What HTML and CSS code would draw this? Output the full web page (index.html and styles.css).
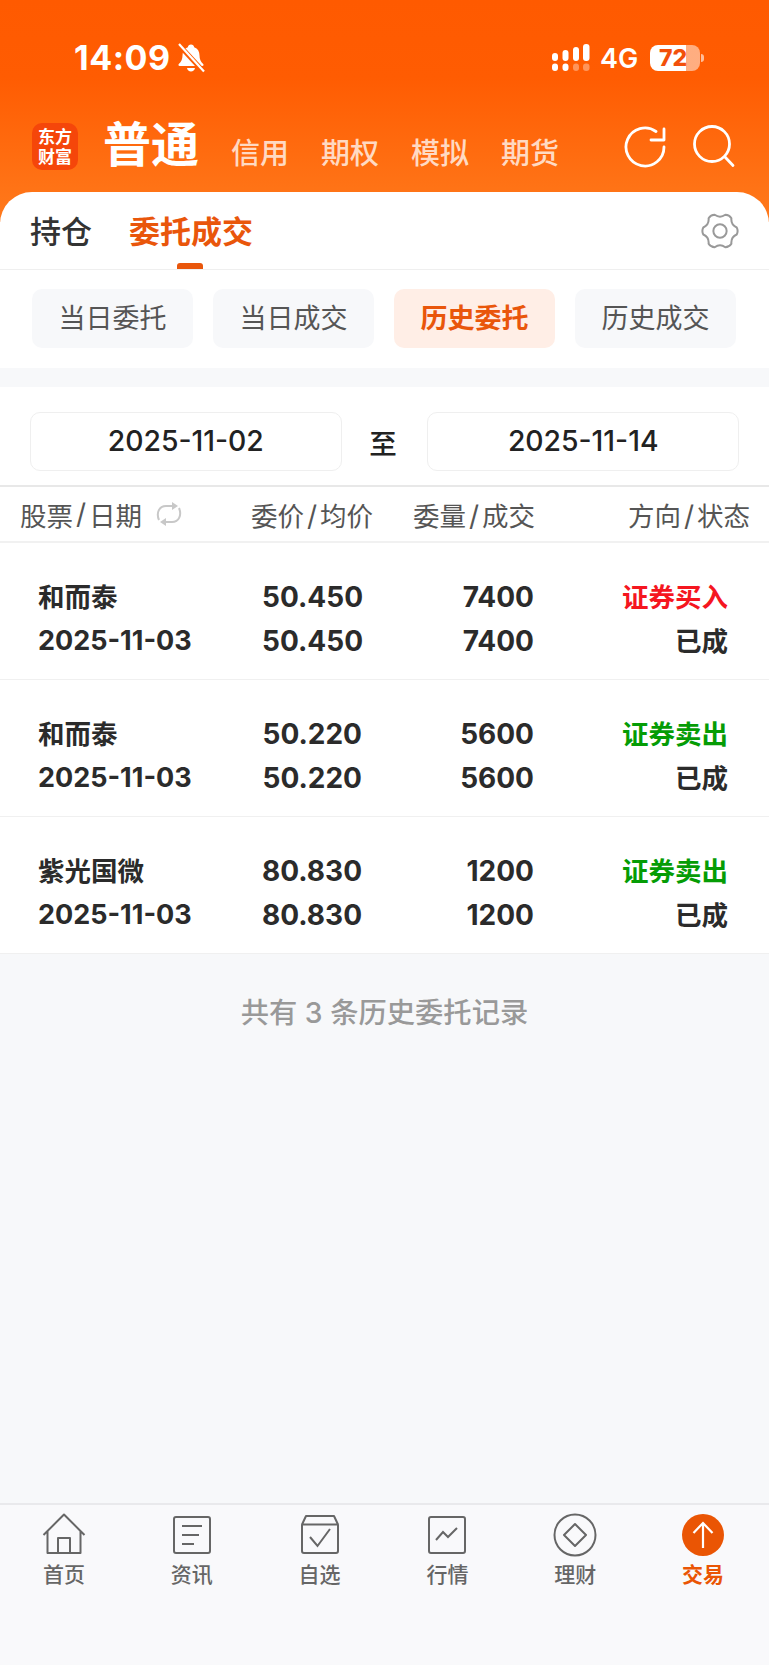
FILE: index.html
```html
<!DOCTYPE html>
<html lang="zh-CN">
<head>
    <meta charset="UTF-8">
    <title>委托成交</title>
    <link rel="stylesheet" href="styles.css">
</head>
<body>
<div class="page">
    <header class="top">
        <div class="status">
            <span class="time">14:09</span>
            <svg class="bell" width="28" height="30" viewBox="0 0 28 30">
                <path d="M14 1.500c-1.800 0-3 1.200-3.200 2.800-3.600 1.200-5.300 4.300-5.300 8.200 0 3.800-1.200 6.200-3.700 8.500-.8.800-.3 2 .9 2h22.600c1.200 0 1.700-1.200.9-2-2.500-2.300-3.700-4.700-3.700-8.500 0-3.900-1.700-7-5.300-8.200C17 2.700 15.800 1.500 14 1.500zM10 25c.4 2.200 2 3.600 4 3.600s3.600-1.400 4-3.600z" fill="#fff"/>
                <path d="M1.500 1.500 26.500 28.500" stroke="#ff5c02" stroke-width="5"/>
                <path d="M2 1 27 28.500" stroke="#fff" stroke-width="2.200"/>
            </svg>
            <span class="grow"></span>
            <svg class="signal" width="40" height="28" viewBox="0 0 40 28">
                <g fill="#fff">
                    <rect x="1" y="9" width="6" height="8" rx="3"/>
                    <rect x="11.500" y="6" width="6" height="11" rx="3"/>
                    <rect x="22" y="3" width="6" height="14" rx="3"/>
                    <rect x="32" y="0" width="6.500" height="17" rx="3"/>
                    <rect x="1" y="19.500" width="6" height="7.500" rx="3"/>
                    <rect x="11.500" y="19.500" width="6" height="7.500" rx="3"/>
                </g>
                <g fill="#fff" opacity=".35">
                    <rect x="22" y="19.500" width="6" height="7.500" rx="3"/>
                    <rect x="32" y="19.500" width="6.500" height="7.500" rx="3"/>
                </g>
            </svg>
            <span class="net">4G</span>
            <span class="battery"><span class="batteryNum">72</span></span>
            <span class="batteryNub"></span>
        </div>
        <div class="brand">
            <div class="logo"><span>东方</span><span>财富</span></div>
            <span class="accNow">普通</span>
            <span class="acc acc1">信用</span>
            <span class="acc">期权</span>
            <span class="acc">模拟</span>
            <span class="acc">期货</span>
            <span class="grow"></span>
            <svg class="topIcon" width="44" height="44" viewBox="0 0 44 44" fill="none" stroke="#fff" stroke-width="2.800">
                <path d="M40 23A19 19 0 1 1 32 7.500" stroke-linecap="round"/>
                <path d="M27 16H40V5" stroke-linecap="round" stroke-linejoin="round"/>
            </svg>
            <svg class="topIcon searchIcon" width="44" height="44" viewBox="0 0 44 44" fill="none" stroke="#fff" stroke-width="2.800">
                <circle cx="20" cy="20" r="17.500"/>
                <path d="M33 33 41 41.500" stroke-linecap="round"/>
            </svg>
        </div>
    </header>

    <div class="sheet">
        <div class="tabs">
            <span class="tab">持仓</span>
            <span class="tab tabOn">委托成交</span>
            <span class="grow"></span>
            <svg class="gear" width="38" height="38" viewBox="0 0 40 40" fill="none" stroke="#999" stroke-width="2.100">
                <path d="M37.600 16.300Q39.500 20 37.600 23.700Q31.300 26.500 32 33.400Q29.750 36.900 25.600 37.100Q20 33 14.400 37.100Q10.250 36.900 8 33.400Q8.700 26.500 2.400 23.700Q.5 20 2.400 16.300Q8.700 13.500 8 6.600Q10.250 3.100 14.400 2.900Q20 7 25.600 2.900Q29.750 3.100 32 6.600Q31.300 13.500 37.600 16.300z" stroke-linejoin="round"/>
                <circle cx="20" cy="20" r="7"/>
            </svg>
        </div>
        <div class="chips">
            <span class="chip">当日委托</span>
            <span class="chip">当日成交</span>
            <span class="chip chipOn">历史委托</span>
            <span class="chip">历史成交</span>
        </div>
    </div>

    <div class="dates">
        <span class="dateBox">2025-11-02</span>
        <span class="dateTo">至</span>
        <span class="dateBox">2025-11-14</span>
    </div>

    <div class="thead">
        <span class="th th1">股票<i>/</i>日期
            <svg class="swap" width="28" height="28" viewBox="0 0 28 28" fill="none" stroke="#c8c8c8" stroke-width="2">
                <path d="M4 20C1 13 4 6 11 6h7"/>
                <path d="M24 8c3 7 0 14-7 14h-7"/>
                <path d="M17 2 23 6l-6 4zM11 18 5 22l6 4z" fill="#c8c8c8" stroke="none"/>
            </svg>
        </span>
        <span class="th">委价<i>/</i>均价</span>
        <span class="th">委量<i>/</i>成交</span>
        <span class="th">方向<i>/</i>状态</span>
    </div>

    <div class="list">
        <div class="row">
            <span class="cn">和而泰</span><span class="num">50.450</span><span class="num">7400</span><span class="num cn buy">证券买入</span>
            <span class="day">2025-11-03</span><span class="num">50.450</span><span class="num">7400</span><span class="num cn">已成</span>
        </div>
        <div class="row">
            <span class="cn">和而泰</span><span class="num">50.220</span><span class="num">5600</span><span class="num cn sell">证券卖出</span>
            <span class="day">2025-11-03</span><span class="num">50.220</span><span class="num">5600</span><span class="num cn">已成</span>
        </div>
        <div class="row">
            <span class="cn">紫光国微</span><span class="num">80.830</span><span class="num">1200</span><span class="num cn sell">证券卖出</span>
            <span class="day">2025-11-03</span><span class="num">80.830</span><span class="num">1200</span><span class="num cn">已成</span>
        </div>
    </div>

    <div class="total">共有 3 条历史委托记录</div>

    <nav class="nav">
        <div class="navItem">
            <svg width="44" height="44" viewBox="0 0 44 44" fill="none" stroke="#666" stroke-width="2">
                <path d="M1.500 22 22 1.500 42.500 22M5.500 18.500V40H38.500V18.500M16 40V25H28V40" stroke-linejoin="round"/>
            </svg>
            <span>首页</span>
        </div>
        <div class="navItem">
            <svg width="44" height="44" viewBox="0 0 44 44" fill="none" stroke="#666" stroke-width="2">
                <rect x="4" y="4" width="36" height="36" rx="2"/>
                <path d="M12 13H32M12 22H29M12 31H24"/>
            </svg>
            <span>资讯</span>
        </div>
        <div class="navItem">
            <svg width="44" height="44" viewBox="0 0 44 44" fill="none" stroke="#666" stroke-width="2">
                <path d="M4 11.500 8 3H36L40 11.500M4 11.500H40V38a2 2 0 0 1-2 2H6a2 2 0 0 1-2-2z" stroke-linejoin="round"/>
                <path d="M12 24 19.500 33 32 16"/>
            </svg>
            <span>自选</span>
        </div>
        <div class="navItem">
            <svg width="44" height="44" viewBox="0 0 44 44" fill="none" stroke="#666" stroke-width="2">
                <rect x="4" y="4" width="36" height="36" rx="2"/>
                <path d="M11 27 18 19 23 24 32 15"/>
            </svg>
            <span>行情</span>
        </div>
        <div class="navItem">
            <svg width="44" height="44" viewBox="0 0 44 44" fill="none" stroke="#666" stroke-width="2">
                <circle cx="22" cy="22" r="20.500"/>
                <path d="M22 11 33 22 22 33 11 22z" stroke-linejoin="round"/>
            </svg>
            <span>理财</span>
        </div>
        <div class="navItem navOn">
            <svg width="44" height="44" viewBox="0 0 44 44" fill="none">
                <circle cx="22" cy="22" r="21" fill="#ea5504"/>
                <path d="M22 35V10M12.500 20 22 10 31.500 20" stroke="#fff" stroke-width="2.200"/>
            </svg>
            <span>交易</span>
        </div>
    </nav>
</div>
</body>
</html>
```

FILE: styles.css
```css
*{
    box-sizing: border-box;
}
body{
    margin: 0;
    font-family: Inter, "Noto Sans CJK SC", sans-serif;
    color: #222;
    background-color: #f7f8fa;
}
.page{
    display: flex;
    flex-direction: column;
    height: 1665px;
    overflow: hidden;
}
.grow{
    flex: 1;
}

/* 顶部橙色区域 */
.top{
    height: 222px;
    padding: 0 33px 0 32px;
    background: linear-gradient(180deg, #ff5a00 0%, #ff5c02 35%, #ff7a1c 100%);
    color: #fff;
}
.status{
    display: flex;
    align-items: center;
    height: 28px;
    margin-top: 44px;
    padding: 0 32px 0 42px;
}
.time{
    font-size: 34px;
    font-weight: 700;
    letter-spacing: .5px;
    line-height: 28px;
}
.bell{
    margin-left: 6px;
}
.signal{
    margin-right: 9px;
}
.net{
    width: 44px;
    font-size: 27px;
    font-weight: 600;
}
.battery{
    display: flex;
    align-items: center;
    justify-content: center;
    width: 50px;
    height: 26px;
    margin-left: 6px;
    border-radius: 8px;
    background: linear-gradient(90deg, #fff 72%, rgba(255,255,255,.5) 72%);
}
.batteryNum{
    margin-right: 4px;
    color: #f2500a;
    font-size: 23px;
    font-weight: 800;
}
.batteryNub{
    width: 3px;
    height: 8px;
    margin-left: 1px;
    border-radius: 0 3px 3px 0;
    background-color: rgba(255,255,255,.6);
}
.brand{
    display: flex;
    align-items: flex-end;
    height: 48px;
    margin-top: 50px;
}
.logo{
    display: flex;
    flex-direction: column;
    align-items: center;
    justify-content: center;
    width: 46px;
    height: 47px;
    margin-right: 25px;
    border-radius: 10px;
    background-color: #f5460a;
    font-size: 17px;
    font-weight: 700;
    line-height: 20px;
}
.accNow{
    width: 96px;
    font-size: 48px;
    font-weight: 700;
    line-height: 50px;
}
.acc{
    width: 57px;
    margin-bottom: -3px;
    margin-left: 33px;
    color: rgba(255,255,255,.75);
    font-size: 29px;
    font-weight: 500;
    line-height: 38px;
    white-space: nowrap;
}
.acc1{
    margin-left: 32px;
}
.topIcon{
    margin-bottom: 2px;
}
.searchIcon{
    margin-left: 24px;
}

/* 白色卡片 */
.sheet{
    height: 176px;
    margin-top: -30px;
    border-radius: 32px 32px 0 0;
    background-color: #fff;
}
.tabs{
    position: relative;
    display: flex;
    align-items: center;
    height: 78px;
    padding: 0 30px 3px;
    border-bottom: 1px solid #efefef;
}
.tab{
    margin-right: 37px;
    color: #333;
    font-size: 31px;
    font-weight: 500;
}
.tabOn{
    color: #e9560b;
    font-weight: 700;
}
/* 选中下划线 */
.tabOn::after{
    content: "";
    position: absolute;
    left: 177px;
    bottom: 0;
    width: 26px;
    height: 6px;
    border-radius: 3px 3px 0 0;
    background-color: #e9560b;
}
.gear{
    margin-top: 4px;
}
.chips{
    display: grid;
    grid-template-columns: repeat(4, 161px);
    gap: 20px;
    padding: 19px 32px 0;
}
.chip{
    height: 59px;
    border-radius: 10px;
    background-color: #f7f8fa;
    color: #555;
    font-size: 27px;
    line-height: 59px;
    text-align: center;
}
.chipOn{
    background-color: #ffeee6;
    color: #e9560b;
    font-weight: 700;
}

/* 日期 */
.dates{
    display: flex;
    align-items: center;
    height: 98px;
    margin-top: 19px;
    padding: 25px 30px 14px;
    background-color: #fff;
}
.dateBox{
    width: 312px;
    height: 59px;
    border: 1px solid #efefef;
    border-radius: 10px;
    font-size: 28.300px;
    font-weight: 500;
    line-height: 57px;
    text-align: center;
}
.dateTo{
    width: 86px;
    padding-right: 3px;
    font-size: 27.500px;
    font-weight: 500;
    text-align: center;
}

/* 表头 */
.thead{
    display: grid;
    grid-template-columns: 231px 162px 215px 1fr;
    align-items: center;
    height: 58px;
    padding-left: 20px;
    border-top: 2px solid #e8e8e8;
    border-bottom: 2px solid #f1f1f1;
    background-color: #fff;
    color: #555;
    font-size: 26.500px;
}
.th i{
    margin: 0 3px;
    font-size: 28px;
    font-style: normal;
}
.th1{
    display: flex;
    align-items: center;
}
.swap{
    margin-left: 13px;
}

/* 列表 */
.row{
    display: grid;
    grid-template-columns: 224px 100px 172px 1fr;
    align-content: center;
    row-gap: 4px;
    height: 137px;
    padding: 15px 41px 0 38px;
    border-bottom: 1px solid #f0f0f0;
    background-color: #fff;
    color: #2b2b2b;
    font-size: 28px;
    font-weight: 700;
    line-height: 40px;
}
.cn{
    font-size: 26.500px;
}
.day{
    font-size: 27px;
}
.num{
    text-align: right;
}
.buy{
    color: #f5161f;
}
.sell{
    color: #059c05;
}
.total{
    margin-top: 39px;
    color: #999;
    font-size: 28.300px;
    font-weight: 500;
    line-height: 40px;
    text-align: center;
}

/* 底部导航 */
.nav{
    display: grid;
    grid-template-columns: repeat(6, 1fr);
    height: 162px;
    margin-top: auto;
    padding: 8px 2px 0 0;
    border-top: 2px solid #e9e9ec;
    background-color: #f9f9fb;
}
.navItem{
    display: flex;
    flex-direction: column;
    align-items: center;
    color: #666;
    font-size: 21px;
    font-weight: 500;
    line-height: 28px;
}
.navItem span{
    margin-top: 4px;
}
.navOn{
    color: #ea5504;
    font-weight: 700;
}
```
